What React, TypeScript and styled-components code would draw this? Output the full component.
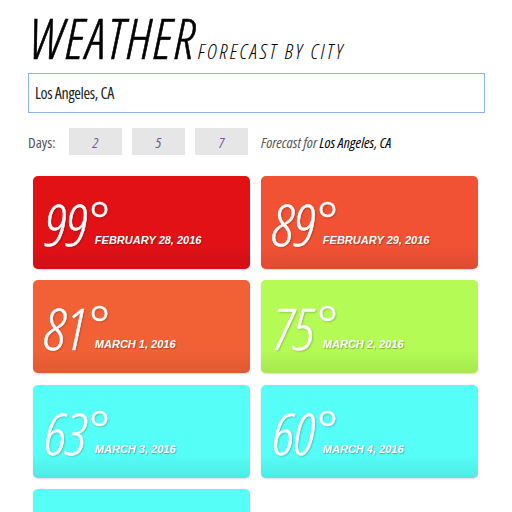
import React from "react";
import styled, { createGlobalStyle } from "styled-components";

const forecast = [
  { temp: 99, date: "February 28, 2016", color: "#e11116" },
  { temp: 89, date: "February 29, 2016", color: "#f15234" },
  { temp: 81, date: "March 1, 2016", color: "#f26136" },
  { temp: 75, date: "March 2, 2016", color: "#b4fb55" },
  { temp: 63, date: "March 3, 2016", color: "#55fef6" },
  { temp: 60, date: "March 4, 2016", color: "#55fef6" },
  { temp: 62, date: "March 5, 2016", color: "#55fef6" },
];

const GlobalStyle = createGlobalStyle`
  body {
    margin: 0;
    background: #fff;
    font-family: "Open Sans", "Liberation Sans", sans-serif;
  }
`;

const Page = styled.div`
  width: 457px;
  padding: 9px 0 0 28px;
  box-sizing: content-box;
`;

const Header = styled.h1`
  margin: 0 0 0 2px;
  display: flex;
  align-items: baseline;
  font-style: italic;
  font-weight: 300;
  font-stretch: 75%;
  color: #000;
`;

const Title = styled.span`
  font-size: 55px;
  line-height: 58px;
  letter-spacing: 1.7px;
  -webkit-text-stroke: 0.6px #000;
`;

const Subtitle = styled.span`
  font-size: 21px;
  letter-spacing: 2.5px;
  margin-left: 1px;
`;

const CityInput = styled.input`
  display: block;
  width: 100%;
  height: 40px;
  margin-top: 6px;
  box-sizing: border-box;
  border: 1px solid #8eb3f2;
  padding: 0 6px;
  font-family: "Open Sans", "Liberation Sans", sans-serif;
  font-stretch: 75%;
  font-size: 16px;
  letter-spacing: -0.35px;
  color: #222;
  outline: none;
`;

const DaysRow = styled.div`
  display: flex;
  align-items: center;
  height: 27px;
  margin-top: 15px;
  font-stretch: 75%;
  font-size: 15px;
`;

const Label = styled.span`
  color: #555;
  width: 41px;
`;

const DayButton = styled.button`
  width: 53px;
  height: 27px;
  margin-right: 10px;
  border: none;
  background: #e6e6e6;
  color: #6e5a9a;
  font-family: "Open Sans", "Liberation Sans", sans-serif;
  font-stretch: 75%;
  font-style: italic;
  font-size: 15px;
  padding: 0;
`;

const ForecastFor = styled.span`
  margin-left: 3px;
  font-style: italic;
  color: #555;

  strong {
    font-weight: 400;
    color: #000;
  }
`;

const Grid = styled.div`
  display: grid;
  grid-template-columns: 217px 217px;
  column-gap: 11px;
  row-gap: 11.4px;
  margin: 21px 0 0 5px;
`;

const Card = styled.div<{ $bg: string }>`
  height: 93px;
  border-radius: 5px;
  background: ${(p) => p.$bg};
  background-image: linear-gradient(
    to bottom,
    rgba(0, 0, 0, 0) 75%,
    rgba(0, 0, 0, 0.08) 100%
  );
  box-shadow: 0 1px 2px rgba(0, 0, 0, 0.15);
  display: flex;
  align-items: flex-end;
  padding: 0 0 22px 12px;
  box-sizing: border-box;
  overflow: hidden;
`;

const Temp = styled.span`
  color: #fff;
  font-weight: 300;
  font-style: italic;
  font-stretch: 75%;
  font-size: 58px;
  line-height: 46px;
  -webkit-text-stroke: 0.5px #fff;
  text-shadow: 1px 1px 2px rgba(0, 0, 0, 0.25);
`;

const Degree = styled.span`
  display: inline-block;
  width: 6px;
  font-style: normal;
  font-size: 60px;
  margin-left: 2px;
`;

const DateText = styled.span`
  color: #fff;
  font-family: "Liberation Sans", Arial, sans-serif;
  font-weight: 700;
  font-style: italic;
  font-size: 11px;
  text-transform: uppercase;
  margin-bottom: 1px;
  text-shadow: 1px 1px 1px rgba(0, 0, 0, 0.3);
`;

export default function App() {
  return (
    <>
      <GlobalStyle />
      <Page>
        <Header>
          <Title>WEATHER</Title>
          <Subtitle>FORECAST BY CITY</Subtitle>
        </Header>
        <CityInput defaultValue="Los Angeles, CA" />
        <DaysRow>
          <Label>Days:</Label>
          <DayButton>2</DayButton>
          <DayButton>5</DayButton>
          <DayButton>7</DayButton>
          <ForecastFor>
            Forecast for <strong>Los Angeles, CA</strong>
          </ForecastFor>
        </DaysRow>
        <Grid>
          {forecast.map((d) => (
            <Card key={d.date} $bg={d.color}>
              <Temp>
                {d.temp}
                <Degree>°</Degree>
              </Temp>
              <DateText>{d.date}</DateText>
            </Card>
          ))}
        </Grid>
      </Page>
    </>
  );
}
